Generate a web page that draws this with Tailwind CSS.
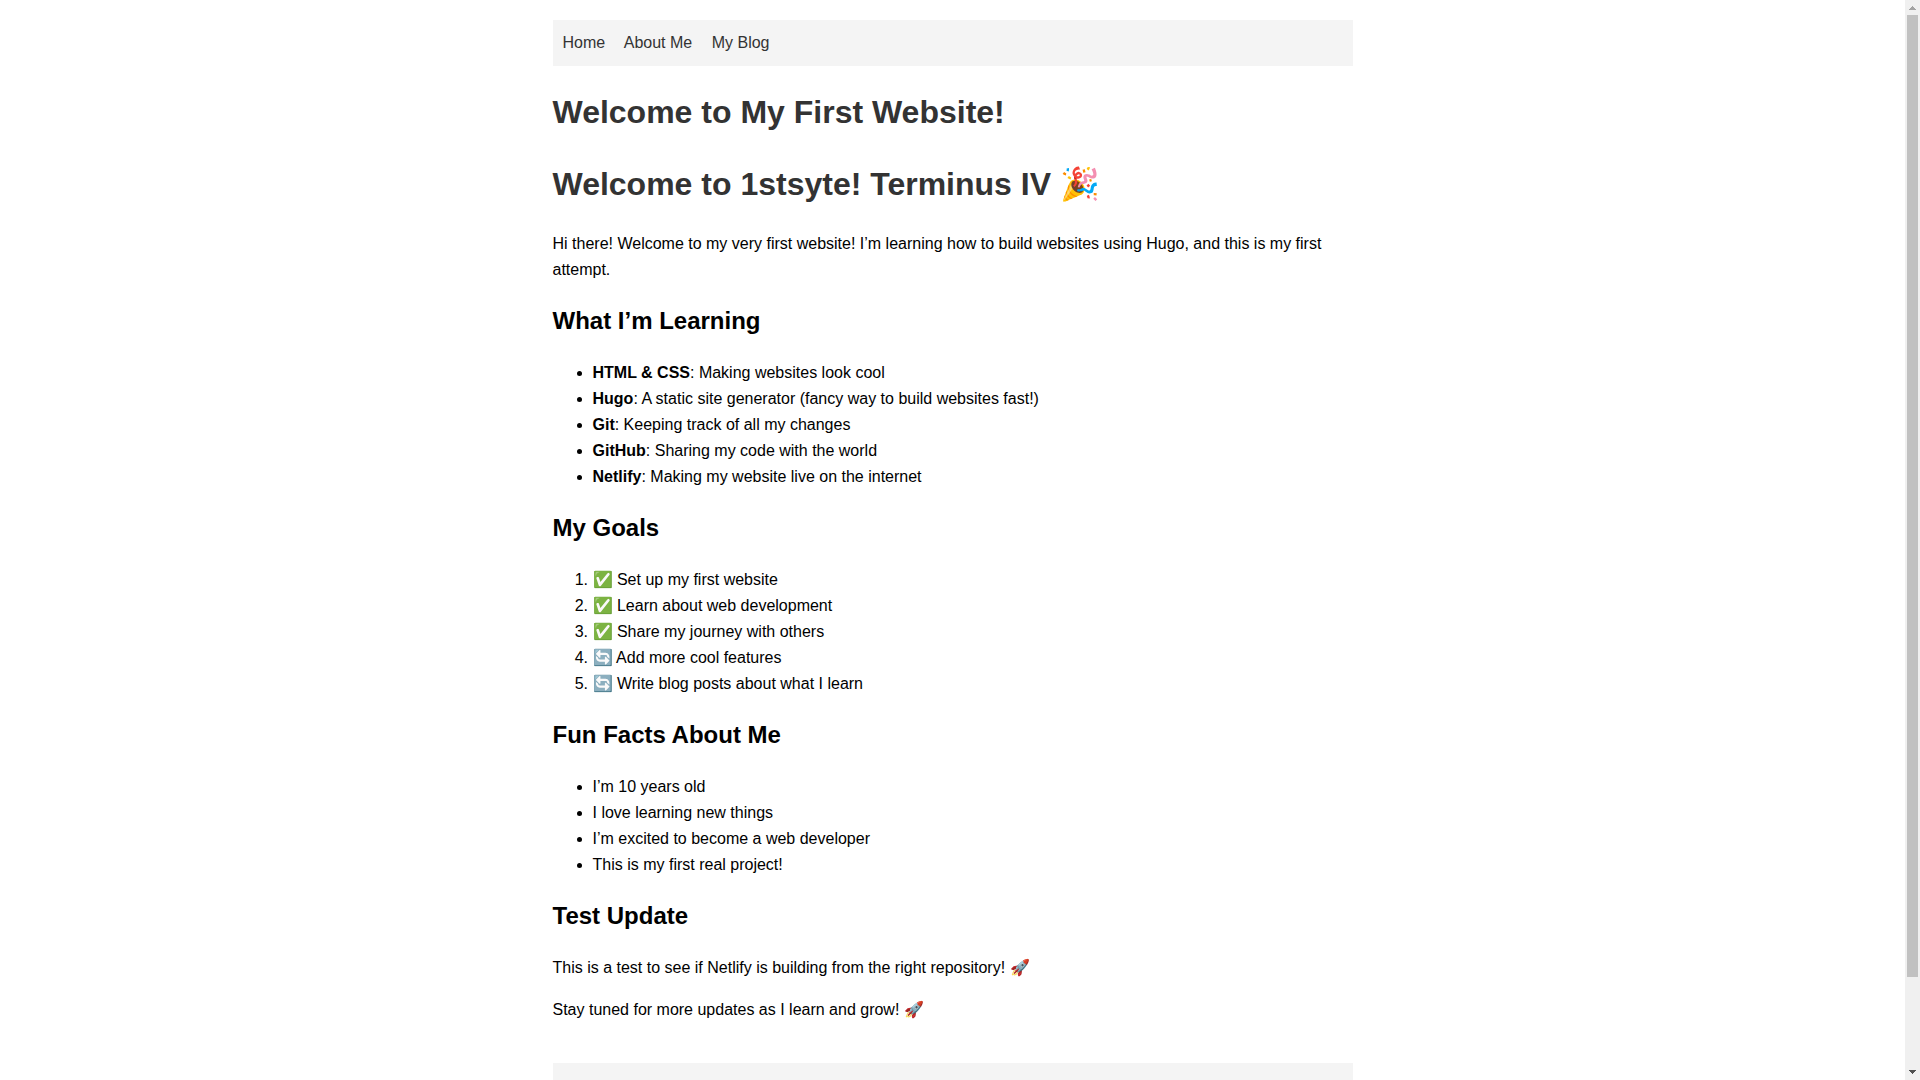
<!DOCTYPE html>
<html lang="en">

<head>
    <meta charset="UTF-8">
    <meta name="viewport" content="width=device-width, initial-scale=1.0">
    <script src="https://cdn.jsdelivr.net/npm/@tailwindcss/browser@4"></script>
    <title>My First Website</title>
</head>

<body class="flex h-screen overflow-hidden bg-white text-black text-base leading-[26px] font-['Liberation_Sans',Arial,sans-serif]">
    <div id="page" class="flex-1 overflow-y-auto [scrollbar-width:none]">
        <div class="mx-auto max-w-[840px] p-5">
            <nav class="bg-[#f4f4f4] p-[10px]">
                <a href="#" class="mr-[15px] text-[#333]">Home</a>
                <a href="#about" class="mr-[15px] text-[#333]">About Me</a>
                <a href="#blog" class="mr-[15px] text-[#333]">My Blog</a>
            </nav>

            <main>
                <h1 class="my-[21px] text-[32px] leading-[51px] font-bold text-[#333]">Welcome to My First Website!</h1>
                <h1 class="my-[21px] text-[32px] leading-[51px] font-bold text-[#333]">Welcome to 1stsyte! Terminus IV 🎉</h1>
                <p>Hi there! Welcome to my very first website! I’m learning how to build websites using Hugo, and this is my first attempt.</p>

                <h2 class="mt-[19px] mb-5 text-2xl leading-[38px] font-bold">What I’m Learning</h2>
                <ul class="list-disc pl-10">
                    <li><strong>HTML &amp; CSS</strong>: Making websites look cool</li>
                    <li><strong>Hugo</strong>: A static site generator (fancy way to build websites fast!)</li>
                    <li><strong>Git</strong>: Keeping track of all my changes</li>
                    <li><strong>GitHub</strong>: Sharing my code with the world</li>
                    <li><strong>Netlify</strong>: Making my website live on the internet</li>
                </ul>

                <h2 class="mt-[19px] mb-5 text-2xl leading-[38px] font-bold">My Goals</h2>
                <ol class="list-decimal pl-10">
                    <li>✅ Set up my first website</li>
                    <li>✅ Learn about web development</li>
                    <li>✅ Share my journey with others</li>
                    <li>🔄 Add more cool features</li>
                    <li>🔄 Write blog posts about what I learn</li>
                </ol>

                <h2 class="mt-[19px] mb-5 text-2xl leading-[38px] font-bold">Fun Facts About Me</h2>
                <ul class="list-disc pl-10">
                    <li>I’m 10 years old</li>
                    <li>I love learning new things</li>
                    <li>I’m excited to become a web developer</li>
                    <li>This is my first real project!</li>
                </ul>

                <h2 class="mt-[19px] mb-5 text-2xl leading-[38px] font-bold">Test Update</h2>
                <p class="my-4">This is a test to see if Netlify is building from the right repository! 🚀</p>
                <p class="my-4">Stay tuned for more updates as I learn and grow! 🚀</p>
            </main>

            <footer class="mt-10 h-[98px] bg-[#f4f4f4]"></footer>
        </div>
    </div>

    <!-- scroll bar -->
    <div class="flex w-[15px] shrink-0 flex-col bg-[#f0f0f0]">
        <button type="button" id="scroll_up" aria-label="Scroll up" class="h-[15px] w-full shrink-0">
            <svg class="block" width="15" height="15" viewBox="0 0 15 15" shape-rendering="crispEdges" fill="#a3a3a3"><path d="M7 6h1v1h1v1h1v1h1v1H4V9h1V8h1V7h1z" /></svg>
        </button>
        <div class="min-h-0 flex-1 px-0.5">
            <div class="h-[91.6%] bg-[#c1c1c1]"></div>
        </div>
        <button type="button" id="scroll_down" aria-label="Scroll down" class="h-[15px] w-full shrink-0">
            <svg class="block" width="15" height="15" viewBox="0 0 15 15" shape-rendering="crispEdges" fill="#505050"><path d="M4 5h7v1h-1v1H9v1H8v1H7V8H6V7H5V6H4z" /></svg>
        </button>
    </div>
</body>
<script>
    document.getElementById('scroll_up').addEventListener('click', function () {
        document.getElementById('page').scrollBy(0, -40);
    });
    document.getElementById('scroll_down').addEventListener('click', function () {
        document.getElementById('page').scrollBy(0, 40);
    });
</script>

</html>
